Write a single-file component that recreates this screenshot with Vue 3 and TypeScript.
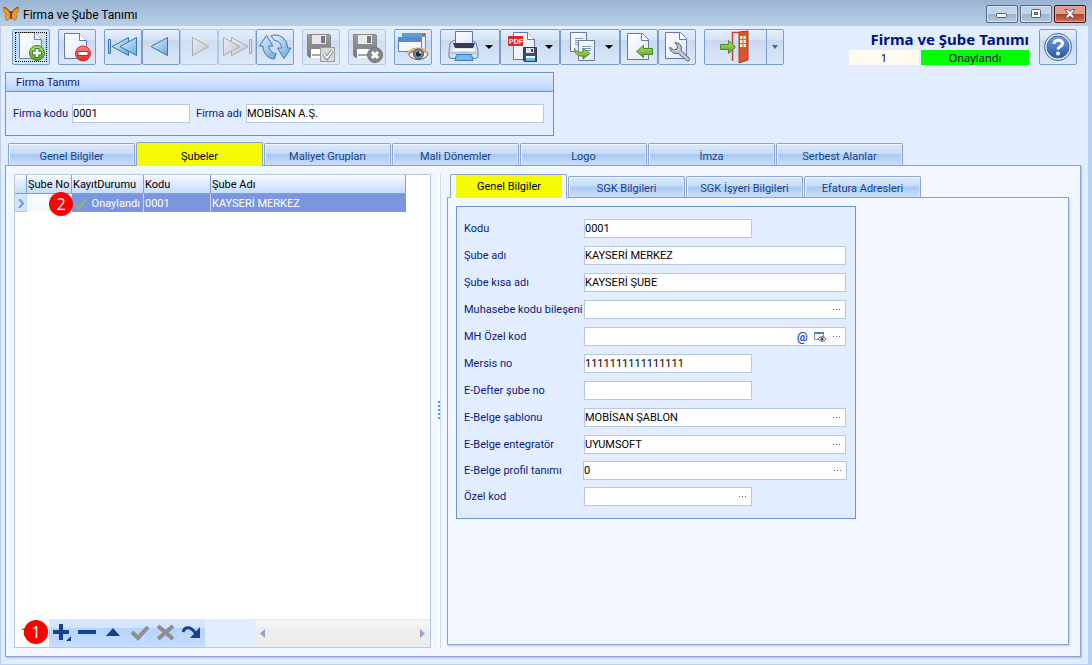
<script setup lang="ts">
import { ref } from 'vue'

interface Field {
  id: string
  label: string
  value: string
  short?: boolean
  wide?: boolean
  lookup?: boolean
  extras?: boolean
  tight?: boolean
}

const mainTabs = ['Genel Bilgiler', 'Şubeler', 'Maliyet Grupları', 'Mali Dönemler', 'Logo', 'İmza', 'Serbest Alanlar']
const activeMain = ref('Şubeler')
const branchTabs = ['Genel Bilgiler', 'SGK Bilgileri', 'SGK İşyeri Bilgileri', 'Efatura Adresleri']
const activeBranch = ref('Genel Bilgiler')

const companyCode = ref('0001')
const companyName = ref('MOBİSAN A.Ş.')

const fields = ref<Field[]>([
  { id: 'kodu', label: 'Kodu', value: '0001', short: true },
  { id: 'sube-adi', label: 'Şube adı', value: 'KAYSERİ MERKEZ' },
  { id: 'kisa-adi', label: 'Şube kısa adı', value: 'KAYSERİ ŞUBE' },
  { id: 'muhasebe', label: 'Muhasebe kodu bileşeni', value: '', lookup: true },
  { id: 'mh-ozel', label: 'MH Özel kod', value: '', lookup: true, extras: true },
  { id: 'mersis', label: 'Mersis no', value: '1111111111111111', short: true },
  { id: 'e-defter', label: 'E-Defter şube no', value: '', short: true },
  { id: 'sablon', label: 'E-Belge şablonu', value: 'MOBİSAN ŞABLON', lookup: true },
  { id: 'entegrator', label: 'E-Belge entegratör', value: 'UYUMSOFT', lookup: true },
  { id: 'profil', label: 'E-Belge profil tanımı', value: '0', lookup: true, wide: true, tight: true },
  { id: 'ozel', label: 'Özel kod', value: '', lookup: true, short: true, tight: true },
])
</script>

<template>
  <div class="window">
    <svg class="defs" aria-hidden="true">
      <defs>
        <linearGradient id="gPage" x1="0" y1="0" x2="1" y2="1"><stop offset="0" stop-color="#ffffff" /><stop offset="1" stop-color="#dfe7f5" /></linearGradient>
        <linearGradient id="gBlue" x1="0" y1="0" x2="1" y2="1"><stop offset="0" stop-color="#e2f4fe" /><stop offset="1" stop-color="#67a9dc" /></linearGradient>
        <linearGradient id="gGrey" x1="0" y1="0" x2="1" y2="1"><stop offset="0" stop-color="#eceef1" /><stop offset="1" stop-color="#bfc4cb" /></linearGradient>
        <linearGradient id="gGreen" x1="0" y1="0" x2="0" y2="1"><stop offset="0" stop-color="#b9e26b" /><stop offset="1" stop-color="#54a01f" /></linearGradient>
        <linearGradient id="gRed" x1="0" y1="0" x2="0" y2="1"><stop offset="0" stop-color="#ff8b86" /><stop offset="1" stop-color="#e3222a" /></linearGradient>
        <linearGradient id="gFloppy" x1="0" y1="0" x2="0" y2="1"><stop offset="0" stop-color="#9a9b9d" /><stop offset="1" stop-color="#77797c" /></linearGradient>
        <linearGradient id="gHelp" x1="0" y1="0" x2="0" y2="1"><stop offset="0" stop-color="#7ba2dc" /><stop offset="0.5" stop-color="#4a7cc6" /><stop offset="1" stop-color="#2c57a5" /></linearGradient>
      </defs>
    </svg>

    <header class="titlebar">
      <svg class="logo" width="16" height="16" viewBox="0 0 16 16">
        <path d="M7.500 8C6 3 3 1 .5 1c-.4 2.500.4 5.500 2.500 7-1.500 2-1 4.500.8 6.500C5.500 14.500 7 12 7.500 9.500z" fill="#f09a1d" stroke="#a05a14" stroke-width=".6" />
        <path d="M8.500 8c1.500-5 4.500-7 7-7 .4 2.500-.4 5.500-2.500 7 1.500 2 1 4.500-.8 6.500C10.500 14.500 9 12 8.500 9.500z" fill="#f09a1d" stroke="#a05a14" stroke-width=".6" />
        <path d="M1 1.500c2 .5 4 2 6 5.500M15 1.500c-2 .5-4 2-6 5.500" fill="none" stroke="#7a4010" />
        <path d="M8 5v8" stroke="#4d3424" stroke-width="1.500" />
      </svg>
      <span class="caption">Firma ve Şube Tanımı</span>
      <div class="winbtns">
        <button aria-label="Simge durumuna küçült"><svg width="12" height="10"><rect x=".5" y="4.500" width="10" height="4" rx="1" fill="#f7f7f5" stroke="#545e6c" /></svg></button>
        <button aria-label="Ekranı kapla"><svg width="12" height="10"><rect x="1.500" y=".5" width="9" height="8" rx="1" fill="#f7f7f5" stroke="#545e6c" /><rect x="4.500" y="3.500" width="3" height="2" fill="#8da4bd" stroke="#545e6c" /></svg></button>
        <button class="close" aria-label="Kapat"><svg width="12" height="10"><path d="M1 .5h3l2 2 2-2h3L8 4.500l3 4.500H8L6 7 4 9H1l3-4.500z" fill="#fff" stroke="#4b4a5c" stroke-width=".9" /></svg></button>
      </div>
    </header>

    <main class="body">
      <div class="toolbar">
        <button class="tool focus" aria-label="Yeni">
          <svg width="32" height="32"><path d="M4.500 1.500h15l7 7v19h-22z" fill="url(#gPage)" stroke="#7182a8" /><path d="M19.500 1.500v7h7" fill="#fff" stroke="#7182a8" /><circle cx="22" cy="22" r="7.500" fill="url(#gGreen)" stroke="#3f7a20" /><path d="M22 17v10M17 22h10" stroke="#4a8127" stroke-width="4.500" /><path d="M22 18v8M18 22h8" stroke="#fff" stroke-width="2.500" /></svg>
        </button>
        <button class="tool" aria-label="Sil">
          <svg width="32" height="32"><path d="M3.500 2.500h15l7 7v18h-22z" fill="url(#gPage)" stroke="#667aa9" /><path d="M18.500 2.500v7h7" fill="#fff" stroke="#667aa9" /><circle cx="22" cy="22.500" r="7.500" fill="url(#gRed)" stroke="#d02a2f" /><rect x="17" y="20.500" width="10" height="4" fill="#fff" stroke="#b8282b" /></svg>
        </button>
        <div class="set">
          <button class="tool" aria-label="İlk kayıt"><svg width="32" height="32"><g fill="url(#gBlue)" stroke="#3974ad" stroke-linejoin="round"><path d="M1.500 8.500h2v14h-2z" /><path d="M21.500 6.500v18L5 15.500z" /><path d="M29.500 6.500v18L13 15.500z" /></g></svg></button>
          <button class="tool" aria-label="Önceki kayıt"><svg width="32" height="32"><path d="M22.500 6.500v18L6 15.500z" fill="url(#gBlue)" stroke="#3974ad" stroke-linejoin="round" /></svg></button>
          <button class="tool off" disabled aria-label="Sonraki kayıt"><svg width="32" height="32"><path d="M9.500 6.500v18L26 15.500z" fill="url(#gGrey)" stroke="#a5aab4" stroke-linejoin="round" /></svg></button>
          <button class="tool off" disabled aria-label="Son kayıt"><svg width="32" height="32"><g fill="url(#gGrey)" stroke="#a5aab4" stroke-linejoin="round"><path d="M28.500 8.500h2v14h-2z" /><path d="M10.500 6.500v18L27 15.500z" /><path d="M2.500 6.500v18L19 15.500z" /></g></svg></button>
          <button class="tool" aria-label="Yenile">
            <svg width="32" height="32"><g fill="url(#gBlue)" stroke="#3d79ac" stroke-linejoin="round"><path d="M7.500 4.500 14 15h-4c0 4 3 7.500 7 7.500l-1.500 5.500C9 28 4 22 4 15H.5z" /><path d="M25 27.500 18.500 17h4c0-4-3-7.500-7-7.500L12 5c7-3.500 16.500 2 16.500 12h3.500z" /></g></svg>
          </button>
        </div>
        <button class="tool off" disabled aria-label="Kaydet">
          <svg width="32" height="32"><path d="M2.500 3.500h22l1 1v22h-21l-2-2z" fill="url(#gFloppy)" stroke="#85878a" /><path d="M7 4h14v9H7z" fill="#e7e8ea" /><path d="M16 5h4v7h-4z" fill="#77797c" /><path d="M6 18h17v9H6z" fill="#fff" /><path d="M7 23h9v2H7z" fill="#a5a7a9" /><rect x="15.500" y="16.500" width="14" height="14" fill="#d6d7d8" stroke="#9b9c9e" /><path d="m19 23 3 4 5-7" fill="none" stroke="#85878a" stroke-width="3.500" /><path d="m19 23 3 4 5-7" fill="none" stroke="#fff" stroke-width="1.500" /></svg>
        </button>
        <button class="tool off" disabled aria-label="Vazgeç">
          <svg width="32" height="32"><path d="M2.500 3.500h22l1 1v22h-21l-2-2z" fill="url(#gFloppy)" stroke="#85878a" /><path d="M7 4h14v9H7z" fill="#e7e8ea" /><path d="M16 5h4v7h-4z" fill="#77797c" /><path d="M6 18h17v9H6z" fill="#fff" /><path d="M7 23h9v2H7z" fill="#a5a7a9" /><circle cx="24" cy="24" r="7.500" fill="#85878a" stroke="#6d6f72" /><path d="m21 21 6 6m0-6-6 6" stroke="#fff" stroke-width="3" /></svg>
        </button>
        <button class="tool" aria-label="İzle">
          <svg width="32" height="32"><path d="M5.500 2.500h23v16h-23z" fill="#e9effa" stroke="#6c8dbb" /><path d="M5 2h24v4H5z" fill="#5f9cd6" /><path d="M25 3h3v2h-3z" fill="#ef4b3e" /><path d="M1.500 6.500h23v14h-23z" fill="#f2f6fd" stroke="#5e82b6" /><path d="M1 6h24v5H1z" fill="#4c90d0" /><path d="M20 8h3v2h-3z" fill="#ef4b3e" /><path d="M11.500 24c3-5 15-7 19.500-.5-4 6.500-14 7-19.500.5z" fill="#f3f3f3" stroke="#6b5b52" /><path d="M11 23c3-6 15-8 20 0" fill="none" stroke="#e1a868" stroke-width="2.500" /><circle cx="21.500" cy="23" r="5" fill="#6d8aa8" stroke="#3e536b" /><circle cx="21.500" cy="23" r="2.500" fill="#17263b" /><circle cx="23" cy="21.500" r="1" fill="#fff" /></svg>
        </button>
        <div class="set">
          <button class="tool drop" aria-label="Yazdır">
            <svg width="32" height="32"><path d="M3.500 11.500 8 9h16l5 2.500 2 9v6l-3 1H5l-3-1v-6z" fill="#d5dff0" stroke="#6c7fa8" /><path d="M8.500.5h17v13h-17z" fill="url(#gPage)" stroke="#667aa9" /><path d="M6 12h22l-2 5H8z" fill="#343d52" /><path d="M6 19h22" stroke="#fff" stroke-width="2" /><path d="M3 22h28" stroke="#9eafd0" /><path d="M9.500 23.500h15l1.500 6H8z" fill="#71bce9" stroke="#3b7eb5" /></svg>
            <svg class="chev" width="8" height="4"><path d="M0 0h8L4 4z" /></svg>
          </button>
          <button class="tool drop" aria-label="PDF kaydet">
            <svg width="32" height="32"><path d="M6.500 1.500h14l7 7v20h-21z" fill="url(#gPage)" stroke="#667aa9" /><path d="M20.500 1.500v7h7" fill="#fff" stroke="#667aa9" /><rect x="1" y="5" width="15" height="10" rx="1" fill="#d12b2f" /><text x="2" y="13" class="pdf">PDF</text><path d="M16.500 16.500h13v14h-12l-1-1z" fill="#3f4b68" stroke="#2f3a56" /><path d="M19 17h8v5h-8z" fill="#dfe7f5" /><path d="M24 18h2v3h-2z" fill="#3f4b68" /><path d="M19 25h9v5h-9z" fill="#fff" /><path d="M19 27h9v3h-9z" fill="#6ab7ea" /></svg>
            <svg class="chev" width="8" height="4"><path d="M0 0h8L4 4z" /></svg>
          </button>
          <button class="tool drop" aria-label="Kopyala">
            <svg width="32" height="32"><path d="M3.500 1.500h16v19h-16z" fill="url(#gPage)" stroke="#667aa9" /><path d="M8 7.500h8M8 9.500h8M8 11.500h8M8 13.500h4" stroke="#7f95c2" /><path d="M11.500 9.500h16v20h-16z" fill="url(#gPage)" stroke="#667aa9" /><path d="M15 15.500h9M15 17.500h9M15 19.500h9" stroke="#7f95c2" /><path d="M7.500 17.500c2 4 6 4 8.500 3.500v-3.500l7 5-7 5.500v-3c-5 .5-8-2-8.500-7.500z" fill="url(#gGreen)" stroke="#4c8b22" /></svg>
            <svg class="chev" width="8" height="4"><path d="M0 0h8L4 4z" /></svg>
          </button>
          <button class="tool" aria-label="İçe aktar">
            <svg width="32" height="32"><path d="M4.500 2.500h15l6 6v20h-21z" fill="url(#gPage)" stroke="#667aa9" /><path d="M18.500 2.500v7h7" fill="#fff" stroke="#667aa9" /><path d="m13.500 20.500 7-6v3h9v6h-9v3z" fill="url(#gGreen)" stroke="#4c8b22" /></svg>
          </button>
          <button class="tool" aria-label="Ayarlar">
            <svg width="32" height="32"><path d="M4.500 1.500h15l6 6v20h-21z" fill="url(#gPage)" stroke="#667aa9" /><path d="M18.500 1.500v7h7" fill="#fff" stroke="#667aa9" /><path d="m14 11.500 4 1 2.500 3.500-.5 3.500L28 27c1.500 2-.5 4-2.500 2.500L17 22c-4 1.500-8.500-1.500-8-6l3.500 3 3.500-1 .5-3z" fill="#c3cad6" stroke="#4e5b70" /></svg>
          </button>
        </div>
        <div class="split">
          <button class="exit" aria-label="Çıkış">
            <svg width="32" height="34"><path d="M12.500 31V2.500H23" fill="none" stroke="#c9462a" stroke-width="1.500" /><path d="m19 2 9-1v29l-9 3z" fill="#d9552f" stroke="#b23c1d" /><path d="M20 6h6v11h-6z" fill="#f2e6c4" /><path d="M23 6v11M20 9.500h6M20 13.500h6" stroke="#a97d4d" /><path d="M.5 14.500h8v-4l7 6.500-7 6.500v-4h-8z" fill="url(#gGreen)" stroke="#4c8b22" /></svg>
          </button>
          <button class="more" aria-label="Çıkış seçenekleri"><svg width="6" height="4"><path d="M0 0h6L3 4z" fill="#3a6ab0" /></svg></button>
        </div>

        <div class="status">
          <h1>Firma ve Şube Tanımı</h1>
          <div class="chips"><span class="count">1</span><span class="state">Onaylandı</span></div>
        </div>
        <button class="tool" aria-label="Yardım">
          <svg width="32" height="32"><circle cx="16" cy="16" r="13.500" fill="#dce6f4" stroke="#47648f" /><circle cx="16" cy="16" r="11" fill="url(#gHelp)" stroke="#3c65a6" /><path d="M12 13c0-5 8.500-5 8.500-.5 0 3.500-4.500 3-4.500 6" fill="none" stroke="#fff" stroke-width="3" /><circle cx="16" cy="22.500" r="2" fill="#fff" /></svg>
        </button>
      </div>

      <section class="company">
        <h2>Firma Tanımı</h2>
        <div class="company-row">
          <label for="firma-kodu">Firma kodu</label>
          <input id="firma-kodu" v-model="companyCode" class="code" />
          <label for="firma-adi">Firma adı</label>
          <input id="firma-adi" v-model="companyName" class="name" />
        </div>
      </section>

      <nav class="tabs main" role="tablist">
        <button v-for="t in mainTabs" :key="t" role="tab" :aria-selected="t === activeMain" :class="{ active: t === activeMain }" @click="activeMain = t"><span>{{ t }}</span></button>
      </nav>

      <section class="panel">
        <div class="list">
          <table>
            <thead>
              <tr><th class="ind"></th><th class="no">Şube No</th><th class="st">KayıtDurumu</th><th class="cd">Kodu</th><th class="nm">Şube Adı</th></tr>
            </thead>
            <tbody>
              <tr>
                <td class="ind"><svg width="6" height="9"><path d="m1 0 4 4.500L1 9" fill="none" stroke="#6f9fdc" stroke-width="2" /></svg></td>
                <td class="no"><span class="badge two">2</span></td>
                <td class="st"><span class="stat"><svg width="12" height="12"><path d="m1 7 3 4 7-10" fill="none" stroke="#8fc04f" stroke-width="2" /></svg>Onaylandı</span></td>
                <td>0001</td>
                <td>KAYSERİ MERKEZ</td>
              </tr>
            </tbody>
          </table>
          <div class="navigator">
            <div class="rec">1<span class="badge one">1</span></div>
            <div class="navbtns">
              <button aria-label="Ekle"><svg width="20" height="20"><path d="M7 1h4v6h6v4h-6v6H7v-6H1V7h6zM19 13v5h-5z" fill="#15428b" /></svg></button>
              <button aria-label="Çıkar"><svg width="20" height="20"><path d="M0 7h18v4H0z" fill="#15428b" /></svg></button>
              <button aria-label="Düzenle"><svg width="20" height="20"><path d="M2 13h14l-7-8z" fill="#15428b" /></svg></button>
              <button disabled aria-label="Onayla"><svg width="20" height="20"><path d="m2 9 6 6L18 4" fill="none" stroke="#8e8e8e" stroke-width="4" /></svg></button>
              <button disabled aria-label="İptal"><svg width="20" height="20"><path d="m2 3 15 13M17 3 2 16" stroke="#8e8e8e" stroke-width="4" /></svg></button>
              <button aria-label="Yenile"><svg width="20" height="20"><path d="M1 9c2-6 8-6 13 2" fill="none" stroke="#15428b" stroke-width="3" /><path d="M18 4v11H8z" fill="#15428b" /></svg></button>
            </div>
            <div class="gap"></div>
            <div class="scroll">
              <button aria-label="Sola kaydır"><svg width="5" height="9"><path d="M5 0v9L0 4.500z" fill="#8fa3cd" /></svg></button>
              <button aria-label="Sağa kaydır"><svg width="5" height="9"><path d="M0 0v9l5-4.500z" fill="#8fa3cd" /></svg></button>
            </div>
          </div>
        </div>

        <div class="splitter"><svg width="4" height="20"><path d="M2 0v20" stroke="#5b90d4" stroke-width="2" stroke-dasharray="2 2" /></svg></div>

        <div class="detail">
          <nav class="tabs sub" role="tablist">
            <button v-for="t in branchTabs" :key="t" role="tab" :aria-selected="t === activeBranch" :class="{ active: t === activeBranch }" @click="activeBranch = t"><span>{{ t }}</span></button>
          </nav>
          <div class="sheet">
            <form class="form" @submit.prevent>
              <div v-for="f in fields" :key="f.id" class="row" :class="{ tight: f.tight }">
                <label :for="f.id">{{ f.label }}</label>
                <div class="box" :class="{ short: f.short, wide: f.wide }">
                  <input :id="f.id" v-model="f.value" />
                  <button v-if="f.extras" type="button" class="at" aria-label="Adres">@</button>
                  <button v-if="f.extras" type="button" class="view" aria-label="Göster"><svg width="14" height="12"><path d="M1.500 1.500h9v7h-9z" fill="#eef3fb" stroke="#7d93b5" /><path d="M1 1h10v2H1z" fill="#4d82bd" /><path d="M5 8c2-3 6-3 8 0-2 3-6 3-8 0z" fill="#e9ebef" stroke="#5a6575" /><circle cx="9" cy="8" r="1.500" fill="#37475f" /></svg></button>
                  <button v-if="f.lookup" type="button" class="dots" aria-label="Seç"><svg width="8" height="2"><path d="M0 .5h1M3 .5h1M6 .5h1" stroke="#47679a" /></svg></button>
                </div>
              </div>
            </form>
          </div>
        </div>
      </section>
    </main>
  </div>
</template>

<style>
body { margin: 0; }
</style>

<style scoped>
* { box-sizing: border-box; }
.window {
  min-height: 100vh;
  display: flex;
  flex-direction: column;
  background: #b9d1ec;
  font: 11px/14px Tahoma, Roboto, "Noto Sans", sans-serif;
  color: #0a1a80;
}
.defs { position: absolute; width: 0; height: 0; }
button, input { font: inherit; padding: 0; margin: 0; border-radius: 0; }
svg { display: block; flex: none; }
h1, h2 { margin: 0; font: inherit; }

.titlebar {
  height: 26px;
  display: flex;
  align-items: center;
  padding: 2px 6px 0 3px;
  background: linear-gradient(#99b4d1, #b9cfe8);
  color: #000;
  font-size: 12px;
}
.caption { margin-left: 4px; padding-top: 1px; flex: 1; }
.winbtns { display: flex; gap: 2px; }
.winbtns button {
  width: 32px;
  height: 18px;
  display: flex;
  align-items: center;
  justify-content: center;
  border: 1px solid #596b82;
  border-radius: 2px;
  box-shadow: inset 0 0 0 1px #d2e0ef;
  background: linear-gradient(#c3d5e8 50%, #98b2ce 50%, #b8cde3);
}
.winbtns .close {
  border-color: #4a1018;
  box-shadow: inset 0 0 0 1px #e3a698;
  background: linear-gradient(#dd9c8c 50%, #b73b22 50%, #d07556);
}

.body {
  flex: 1;
  display: flex;
  flex-direction: column;
  margin: 0 4px 1px 1px;
  padding: 3px 7px 7px 4px;
  background: #e2eeff;
}
.toolbar { display: flex; gap: 8px; padding: 0 4px 0 7px; }
.set { display: flex; }
.tool, .split {
  height: 36px;
  border: 1px solid #7b9bc8;
  border-radius: 2px;
  background: linear-gradient(#e5effb, #d5e3f4 30%, #c8d9ee 31%, #dbe8f8);
}
.tool {
  width: 38px;
  flex: none;
  display: flex;
  align-items: center;
  justify-content: center;
}
.tool.focus { background: linear-gradient(#cfe4fa, #b8d6f4 50%, #cfe8ff); position: relative; }
.tool.focus::after { content: ""; position: absolute; inset: 2px; border: 1px dotted #000; }
.tool.off { border-color: #b4c7e2; background: linear-gradient(#e2ecf9, #d8e5f5 30%, #cfdef1 31%, #dde9f8); }
.tool.drop { width: 60px; gap: 6px; }
.pdf { font: bold 7px/8px "Liberation Sans", Arial, sans-serif; fill: #fff; }
.split { display: flex; width: 80px; flex: none; }
.split button { border: 0; background: none; display: flex; align-items: center; justify-content: center; }
.exit { flex: 1; }
.split .more { width: 17px; border-left: 1px solid #7b9bc8; }
.status { margin-left: auto; margin-right: 2px; text-align: right; color: #001480; }
.status h1 { font-family: "Noto Sans", "Open Sans", sans-serif; font-size: 15px; line-height: 21px; font-weight: 700; }
.chips { display: flex; justify-content: flex-end; gap: 2px; color: #000; text-align: center; font-family: "Noto Sans", "Open Sans", sans-serif; line-height: 15px; }
.count { width: 70px; background: #fffaf0; }
.state { width: 108px; background: #00ff00; }

.company { width: 549px; height: 64px; margin-top: 7px; border: 1px solid #6a94cf; }
.company h2 { height: 19px; padding-left: 10px; line-height: 20px; border-bottom: 1px solid #6a94cf; background: linear-gradient(#e5f0ff, #b5d3fc); }
.company-row { display: flex; align-items: center; padding: 12px 9px 0 7px; }
.company-row input { height: 19px; border: 1px solid #b4c8e4; padding: 0; color: #000; background: #fff; min-width: 0; }
.company-row label:first-child { width: 59px; }
.company-row .code { width: 118px; margin-right: 6px; }
.company-row label:nth-of-type(2) { width: 50px; }
.company-row .name { flex: 1; }

.tabs { display: flex; align-items: flex-end; gap: 1px; }
.tabs button {
  height: 22px;
  border: 1px solid #8ba3cb;
  border-bottom: 0;
  border-radius: 2px 2px 0 0;
  box-shadow: inset 1px 1px 0 #f0f6ff, inset -1px 0 0 #d7e5fa;
  background: linear-gradient(#dde9fb, #c7dcf8 45%, #a9c9f2 50%, #cbdff9);
  color: #15428b;
  white-space: nowrap;
}
.tabs .active { height: 24px; margin-bottom: -1px; color: #000; background: #f4f9ff; box-shadow: none; position: relative; }
.tabs.main { height: 24px; margin-top: 5px; padding-left: 3px; }
.tabs.main button { width: 127px; padding-top: 4px; }
.tabs.main .active { background: #f5fb00; }

.panel {
  flex: 1;
  min-height: 0;
  display: flex;
  padding: 8px 11px 8px 8px;
  border: 1px solid #8ba3cb;
  background: #f2f7ff;
  box-shadow: 1px 1px 2px #a9bcdc;
}
.list { width: 417px; display: flex; flex-direction: column; border: 1px solid #b4c8e4; background: #fff; }
table { width: 391px; border-collapse: separate; border-spacing: 0; table-layout: fixed; color: #000; }
th { height: 19px; padding: 2px 1px 0; border-right: 1px solid #7ba3da; border-bottom: 1px solid #7ba3da; background: linear-gradient(#f5faff, #c5dcfb); font-weight: 400; text-align: left; white-space: nowrap; }
th.ind { width: 12px; }
th.no { width: 45px; }
th.st { width: 72px; }
th.cd { width: 67px; }
td { height: 18px; padding: 2px 1px 0; border-right: 1px solid #c6d7f2; background: #7b96df; color: #fff; white-space: nowrap; }
td.ind { background: #d3e5fd; border-bottom: 1px solid #a9c6ee; }
td.ind svg { margin-left: 2px; }
td.no { background: #f5faff; position: relative; border-right: 0; }
.stat { display: flex; align-items: center; justify-content: space-between; padding: 0 2px; }
td:last-child { border-right: 0; }
.badge {
  position: absolute;
  width: 24px;
  height: 24px;
  border-radius: 50%;
  background: #f00;
  color: #fff;
  font: 16px/24px "Open Sans", "Noto Sans", sans-serif;
  text-align: center;
  z-index: 1;
}
.two { left: 22px; top: -2px; }
.one { left: 9px; top: 1px; }
.navigator { margin-top: auto; height: 28px; display: flex; }
.rec { width: 34px; padding-left: 6px; line-height: 27px; color: #8a3a00; position: relative; }
.navbtns { width: 156px; display: flex; background: linear-gradient(#d4e6ff 30%, #b6d3fb 34%, #c6deff); }
.navbtns button { flex: 1; border: 0; background: none; display: flex; justify-content: center; padding-top: 4px; }
.gap { width: 50px; background: #e2eeff; }
.scroll { flex: 1; display: flex; justify-content: space-between; align-items: center; padding: 0 5px; background: linear-gradient(#e3e3e3, #f8f8f8 2px, #ededed 10px); }
.scroll button { border: 0; background: none; }

.splitter {
  width: 16px;
  display: flex;
  align-items: center;
  justify-content: center;
  background: linear-gradient(90deg, transparent 7px, #ffffff 7px 9px, #c5dcfb 9px 10px, transparent 10px);
}

.detail { flex: 1; min-width: 0; display: flex; flex-direction: column; margin-bottom: 3px; }
.tabs.sub { height: 23px; padding-left: 3px; }
.tabs.sub button { width: 117px; height: 21px; padding-top: 3px; }
.tabs.sub .active { height: 24px; padding: 0 4px 0 5px; }
.tabs.sub .active span { display: block; line-height: 23px; background: #f5fb00; }
.sheet { flex: 1; padding: 8px; border: 1px solid #8ba3cb; box-shadow: 1px 1px 2px #b9cae6; background: #f2f7ff; }
.form { width: 400px; max-width: 100%; padding: 12px 8px 12px 7px; border: 1px solid #6a94cf; background: #e2eeff; display: flex; flex-direction: column; gap: 8px; }
.row { display: flex; align-items: center; }
.row.tight { margin-top: -1px; }
.row label { width: 120px; flex: none; white-space: nowrap; }
.box { width: 262px; height: 19px; display: flex; align-items: center; border: 1px solid #b4c8e4; background: #fff; }
.box.short { width: 168px; }
.box.wide { width: 264px; margin-left: -1px; }
.box input { flex: 1; min-width: 0; height: 17px; border: 0; padding: 0; background: none; color: #000; }
.box button { border: 0; background: none; display: flex; align-items: center; justify-content: center; }
.dots { width: 17px; height: 17px; }
.view { width: 17px; }
.box .at { width: 17px; color: #1f3fe0; font-size: 12px; font-weight: 700; }
</style>
